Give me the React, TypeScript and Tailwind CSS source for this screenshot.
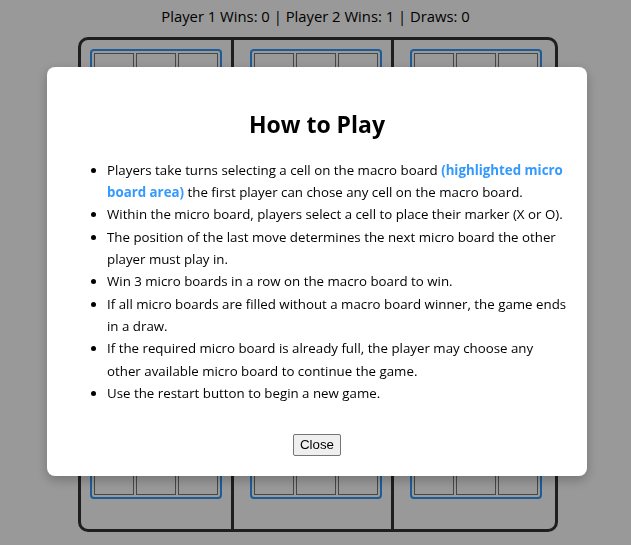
const rules = [
  'Within the micro board, players select a cell to place their marker (X or O).',
  'The position of the last move determines the next micro board the other player must play in.',
  'Win 3 micro boards in a row on the macro board to win.',
  'If all micro boards are filled without a macro board winner, the game ends in a draw.',
  'If the required micro board is already full, the player may choose any other available micro board to continue the game.',
  'Use the restart button to begin a new game.',
];

function MicroBoard() {
  return (
    <div className="rounded-[4px] border-2 border-[#3399ff] p-[2px]">
      <div className="grid grid-cols-3 gap-[2px]">
        {Array.from({ length: 9 }).map((_, i) => (
          <div key={i} className="h-[40px] w-[40px] border border-[#777]" />
        ))}
      </div>
    </div>
  );
}

function Column({ className }: { className: string }) {
  return (
    <div className={`flex flex-col gap-[27px] pb-[30px] pt-[9px] ${className}`}>
      <MicroBoard />
      <MicroBoard />
      <MicroBoard />
    </div>
  );
}

export default function App() {
  return (
    <div className="min-h-[545px] bg-white font-['Open_Sans',sans-serif] text-black">
      <p className="pt-[5px] text-center text-[14.8px] leading-[22px]">
        Player 1 Wins: 0 | Player 2 Wins: 1 | Draws: 0
      </p>

      <div className="mt-[10px] flex justify-center pl-[5px]">
        <div className="flex rounded-[10px] border-[3px] border-[#333]">
          <Column className="border-r-[3px] border-[#333] pl-[9px] pr-[9px]" />
          <Column className="border-r-[3px] border-[#333] pl-[16px] pr-[9px]" />
          <Column className="pl-[16px] pr-[13px]" />
        </div>
      </div>

      <div className="fixed inset-0 flex items-center justify-center bg-black/40">
        <div className="mb-[2px] ml-[3px] w-[540px] rounded-[8px] bg-white p-[20px] shadow-[0_4px_12px_rgba(0,0,0,0.25)]">
          <h2 className="mt-[22px] text-center text-[23px] font-bold leading-[30px]">How to Play</h2>
          <ul className="mt-[20px] list-disc pl-[40px] text-[13.3px] leading-[22.3px]">
            <li>
              Players take turns selecting a cell on the macro board{' '}
              <span className="font-bold text-[#3399ff]">(highlighted micro board area)</span> the first player can chose any
              cell on the macro board.
            </li>
            {rules.map((r) => (
              <li key={r}>{r}</li>
            ))}
          </ul>
          <div className="mt-[30px] flex justify-center">
            <button className="rounded-[2px] border border-[#767676] bg-[#efefef] px-[6px] py-[1px] font-['Liberation_Sans',sans-serif] text-[13.33px] leading-[18px]">
              Close
            </button>
          </div>
        </div>
      </div>
    </div>
  );
}
